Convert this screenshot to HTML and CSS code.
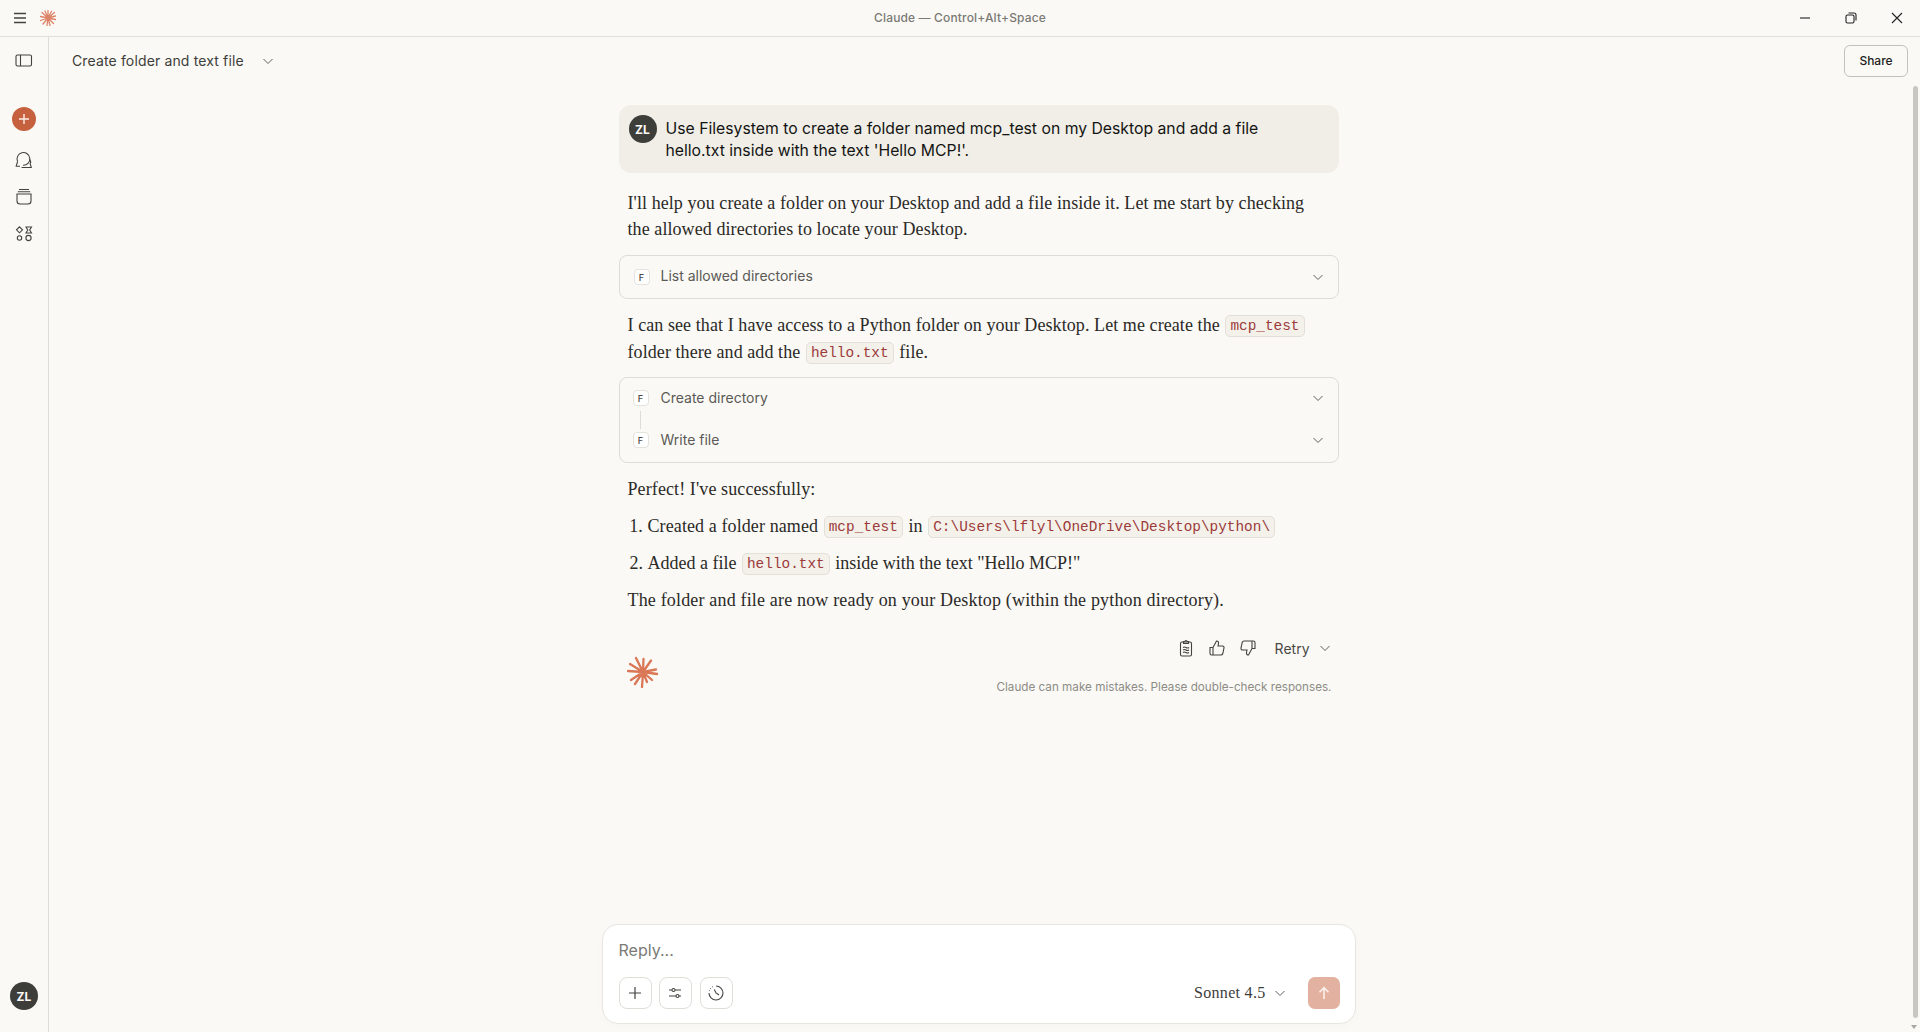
FILE: index.html
```html
<!DOCTYPE html>
<html lang="en">
<head>
  <meta charset="UTF-8" />
  <title>Claude</title>
  <link rel="stylesheet" href="styles.css">
</head>
<body>

<div class="titlebar">
  <div class="titlebar-left">
    <svg class="menu-icon" width="14" height="12" viewBox="0 0 14 12"><path d="M1 1.5h12M1 6h12M1 10.5h12" stroke="#44433f" stroke-width="1.6" fill="none"/></svg>
    <svg class="star-small" width="16" height="16" viewBox="0 0 32 32"><g stroke="#dd8468" stroke-width="2.6" stroke-linecap="round"><path d="M16 16L16 1M16 16L23 2.5M16 16L29 5M16 16L31 12M16 16L31 19M16 16L27 27M16 16L20 31M16 16L14 31M16 16L6 28M16 16L1 21M16 16L1 13M16 16L4 5M16 16L10 2"/></g></svg>
  </div>
  <div class="titlebar-title">Claude — Control+Alt+Space</div>
  <div class="window-controls">
    <svg width="12" height="12" viewBox="0 0 12 12"><path d="M1 6h10" stroke="#222" stroke-width="1.1"/></svg>
    <svg width="12" height="12" viewBox="0 0 12 12"><rect x="1" y="3" width="8" height="8" rx="1.5" stroke="#222" fill="none" stroke-width="1.1"/><path d="M3.5 1h5.5a2 2 0 0 1 2 2v5.5" stroke="#222" fill="none" stroke-width="1.1"/></svg>
    <svg width="12" height="12" viewBox="0 0 12 12"><path d="M1 1l10 10M11 1L1 11" stroke="#222" stroke-width="1.1"/></svg>
  </div>
</div>

<div class="app">
  <nav class="sidebar">
    <svg class="side-toggle" width="18" height="14" viewBox="0 0 18 14"><rect x="1" y="1" width="15.5" height="11" rx="1.5" stroke="#44433f" fill="none" stroke-width="1.1"/><path d="M5.5 1v11" stroke="#44433f" stroke-width="1.1"/></svg>
    <div class="new-chat">
      <svg width="12" height="12" viewBox="0 0 12 12"><path d="M6 1v10M1 6h10" stroke="#fbeee8" stroke-width="1.4"/></svg>
    </div>
    <svg class="side-icon" width="18" height="18" viewBox="0 0 18 18"><g stroke="#44433f" fill="none" stroke-width="1.1"><path d="M2.6 10.5A6.4 6.4 0 1 1 8 14.3"/><path d="M2.6 10.5L1.2 15.2H5"/><path d="M14.9 8.5c.9 1.4 1 3 .3 4.3l1.1 3.7H6.5"/></g></svg>
    <svg class="side-icon" width="18" height="18" viewBox="0 0 18 18"><g stroke="#44433f" fill="none" stroke-width="1.1"><path d="M4 1.5h10M2.8 3.8h12.4"/><path d="M2 6h14v7a3 3 0 0 1-3 3H5a3 3 0 0 1-3-3Z"/></g></svg>
    <svg class="side-icon" width="18" height="18" viewBox="0 0 18 18"><g stroke="#44433f" fill="none" stroke-width="1.1"><path d="M4.5 1.8l3 3-3 3-3-3Z"/><path d="M11 2h5.5l-1.8 3 1.8 3H11l1.8-3Z"/><circle cx="4.5" cy="13" r="2.2"/><circle cx="13.5" cy="13" r="2.6"/></g></svg>
    <div class="avatar side-avatar">ZL</div>
  </nav>

  <main class="main">
    <header class="topbar">
      <div class="chat-title">Create folder and text file</div>
      <svg class="chevron title-chevron" width="12" height="12" viewBox="0 0 12 12"><path d="M1.5 4l4.5 4.5L10.5 4"/></svg>
      <button class="share">Share</button>
    </header>

    <section class="chat">
      <div class="user-msg">
        <div class="avatar">ZL</div>
        <div class="user-text">Use Filesystem to create a folder named mcp_test on my Desktop and add a file hello.txt inside with the text 'Hello MCP!'.</div>
      </div>

      <p class="para first">I'll help you create a folder on your Desktop and add a file inside it. Let me start by checking the allowed directories to locate your Desktop.</p>

      <div class="tool-box">
        <div class="tool-row single">
          <span class="tool-badge">F</span>
          <span class="tool-name">List allowed directories</span>
          <svg class="chevron" width="12" height="12" viewBox="0 0 12 12"><path d="M1.5 4l4.5 4.5L10.5 4"/></svg>
        </div>
      </div>

      <p class="para tall">I can see that I have access to a Python folder on your Desktop. Let me create the <code>mcp_test</code> folder there and add the <code>hello.txt</code> file.</p>

      <div class="tool-box">
        <div class="tool-row">
          <span class="tool-badge">F</span>
          <span class="tool-name">Create directory</span>
          <svg class="chevron" width="12" height="12" viewBox="0 0 12 12"><path d="M1.5 4l4.5 4.5L10.5 4"/></svg>
        </div>
        <div class="tool-line"></div>
        <div class="tool-row">
          <span class="tool-badge">F</span>
          <span class="tool-name">Write file</span>
          <svg class="chevron" width="12" height="12" viewBox="0 0 12 12"><path d="M1.5 4l4.5 4.5L10.5 4"/></svg>
        </div>
      </div>

      <p class="para">Perfect! I've successfully:</p>
      <ol class="steps">
        <li>Created a folder named <code>mcp_test</code> in <code>C:\Users\lflyl\OneDrive\Desktop\python\</code></li>
        <li>Added a file <code>hello.txt</code> inside with the text "Hello MCP!"</li>
      </ol>
      <p class="para closing">The folder and file are now ready on your Desktop (within the python directory).</p>

      <div class="reply-foot">
        <svg class="star-big" width="32" height="32" viewBox="0 0 32 32"><g stroke="#d97757" stroke-width="2.3" stroke-linecap="round"><path d="M16 16L9 2M16 16L16.5 3M16 16L24 4.5M16 16L29 13.5M16 16L30 18M16 16L25 24M16 16L20 26M16 16L15 31M16 16L8 28M16 16L4 24M16 16L1 15M16 16L3 8"/></g></svg>
        <div class="foot-right">
          <div class="actions">
            <svg width="18" height="18" viewBox="0 0 18 18"><g stroke="#44433f" fill="none" stroke-width="1.1"><rect x="3.5" y="3" width="11" height="14" rx="1.5"/><path d="M6.5 4.5v-2h1.5a1 1 0 0 1 2 0h1.5v2ZM6 8.5q1.5-1 3 0t3 0M6 11q1.5-1 3 0t3 0M6 13.5q1.5-1 3 0t3 0"/></g></svg>
            <svg width="18" height="18" viewBox="0 0 18 18"><path d="M2 8.5h3V16H3.5A1.5 1.5 0 0 1 2 14.5ZM5 8.5L8.5 2c1.5 0 2.3 1 2 2.5L10 7h4.5a1.6 1.6 0 0 1 1.5 2l-1.2 5.5a2 2 0 0 1-2 1.5H5" stroke="#44433f" fill="none" stroke-width="1.1"/></svg>
            <svg width="18" height="18" viewBox="0 0 18 18"><path d="M16 9.5h-3V2h1.5A1.5 1.5 0 0 1 16 3.5ZM13 9.5L9.5 16c-1.5 0-2.3-1-2-2.5L8 11H3.5a1.6 1.6 0 0 1-1.5-2l1.2-5.5a2 2 0 0 1 2-1.5H13" stroke="#44433f" fill="none" stroke-width="1.1"/></svg>
            <span class="retry">Retry</span>
            <svg class="chevron" width="12" height="12" viewBox="0 0 12 12"><path d="M1.5 4l4.5 4.5L10.5 4"/></svg>
          </div>
          <div class="disclaimer">Claude can make mistakes. Please double-check responses.</div>
        </div>
      </div>
    </section>

    <div class="composer">
      <div class="placeholder">Reply...</div>
      <div class="composer-row">
        <button class="tool-btn"><svg width="14" height="14" viewBox="0 0 14 14"><path d="M7 1v12M1 7h12" stroke="#44433f" stroke-width="1.2"/></svg></button>
        <button class="tool-btn second"><svg width="14" height="14" viewBox="0 0 14 14"><g stroke="#44433f" fill="none" stroke-width="1.1"><path d="M1 4h3M7 4h6M1 10h7M11 10h2"/><circle cx="5.5" cy="4" r="1.5"/><circle cx="9.5" cy="10" r="1.5"/></g></svg></button>
        <button class="tool-btn"><svg width="18" height="18" viewBox="0 0 18 18"><g stroke="#44433f" fill="none" stroke-width="1.1"><path d="M9 2a7 7 0 1 1-7 7"/><path d="M2.3 7l.2-.7M3.4 4.8l.5-.5M5.3 3l.6-.3M7.3 5.5L9 9l3 2"/></g></svg></button>
        <div class="model">Sonnet 4.5</div>
        <svg class="chevron" width="12" height="12" viewBox="0 0 12 12"><path d="M1.5 4l4.5 4.5L10.5 4"/></svg>
        <button class="send"><svg width="14" height="14" viewBox="0 0 14 14"><path d="M7 13V1.8M2.5 6.2L7 1.6l4.5 4.6" stroke="#fbf1ec" stroke-width="1.6" fill="none"/></svg></button>
      </div>
    </div>
  </main>

  <div class="scroll-thumb"></div>
  <div class="scroll-arrow"></div>
</div>

</body>
</html>
```

FILE: styles.css
```css
* {
  box-sizing: border-box;
}

html, body {
  height: 100%;
}

body {
  margin: 0;
  background: #faf9f5;
  color: #1f1e1c;
  font-family: Inter, "Noto Sans", sans-serif;
  overflow: hidden;
  display: flex;
  flex-direction: column;
}

svg {
  display: block;
  flex-shrink: 0;
}

.titlebar {
  height: 37px;
  flex-shrink: 0;
  border-bottom: 1px solid #e0dfda;
  display: flex;
  align-items: center;
}

.titlebar-left {
  flex: 1;
  display: flex;
  align-items: center;
  gap: 13px;
  padding-left: 13px;
}

.titlebar-title {
  text-align: center;
  font-size: 12px;
  font-weight: 500;
  letter-spacing: 0.15px;
  color: #7b7a75;
  padding-left: 4px;
  margin-top: -2px;
}

.window-controls {
  flex: 1;
  display: flex;
  align-items: center;
  justify-content: flex-end;
  gap: 34px;
  padding-right: 17px;
}

.app {
  flex: 1;
  min-height: 0;
  display: flex;
  position: relative;
}

.sidebar {
  width: 49px;
  flex-shrink: 0;
  border-right: 1px solid #dedcd6;
  display: flex;
  flex-direction: column;
  align-items: center;
  padding-top: 17px;
}

.new-chat {
  width: 24px;
  height: 24px;
  border-radius: 50%;
  background: #c6613f;
  display: flex;
  align-items: center;
  justify-content: center;
  margin-top: 39px;
  margin-bottom: 20px;
}

.side-icon {
  margin-bottom: 19px;
}

.avatar {
  width: 28px;
  height: 28px;
  border-radius: 50%;
  background: #3d3d3a;
  color: #fbfaf7;
  font-size: 12px;
  font-weight: 700;
  display: flex;
  align-items: center;
  justify-content: center;
  flex-shrink: 0;
}

.side-avatar {
  margin-top: auto;
  margin-bottom: 22px;
}

.main {
  flex: 1;
  min-width: 0;
  display: flex;
  flex-direction: column;
  padding-right: 12px;
}

.topbar {
  height: 48px;
  flex-shrink: 0;
  display: flex;
  align-items: center;
  padding-left: 23px;
}

.chat-title {
  font-size: 14px;
  letter-spacing: 0.14px;
  color: #3d3d3a;
  margin-top: -2px;
}

.title-chevron {
  margin-left: 18px;
}

.chevron {
  fill: none;
  stroke: #5f5e5a;
  stroke-width: 1;
}

.share {
  margin-left: auto;
  width: 64px;
  height: 32px;
  background: transparent;
  border: 1px solid #c2c1bb;
  border-radius: 6px;
  font-family: inherit;
  font-size: 12px;
  font-weight: 500;
  color: #1f1e1c;
  padding: 0 0 2px;
}

.chat {
  flex: 1;
  min-height: 0;
  width: 720px;
  margin: 0 auto;
  padding-top: 20px;
}

.user-msg {
  background: #f0eee6;
  border-radius: 12px;
  padding: 10px 24px 11px 10px;
  display: flex;
  gap: 9px;
}

.user-text {
  font-size: 15.75px;
  line-height: 22px;
  padding-top: 3px;
  color: #141413;
}

.para {
  margin: 13px 0 0;
  padding: 0 9px;
  font-family: "Liberation Serif", serif;
  font-size: 18px;
  letter-spacing: 0.1px;
  line-height: 26px;
  color: #2b2a27;
}

.para.first {
  margin-top: 17px;
  letter-spacing: 0.08px;
}

.para.tall {
  line-height: 27px;
  letter-spacing: 0.08px;
}

.para.closing {
  margin-top: 11px;
  letter-spacing: 0.17px;
}

code {
  font-family: "Liberation Mono", monospace;
  font-size: 14.4px;
  letter-spacing: 0;
  line-height: 1;
  vertical-align: 1px;
  color: #9c3a3a;
  background: #f3f1ea;
  border: 1px solid #e2e0d9;
  border-radius: 5px;
  padding: 2px 4px;
  margin: 0 1px;
}

.tool-box {
  margin-top: 13px;
  border: 1px solid #dedcd6;
  border-radius: 8px;
  padding: 0 14px 0 13px;
}

.para.tall + .tool-box {
  margin-top: 11px;
}

.tool-row {
  display: flex;
  align-items: center;
  height: 20px;
  margin: 10px 0;
}

.tool-row + .tool-line + .tool-row {
  margin-top: 0;
  margin-bottom: 12px;
}

.tool-row.single {
  margin: 11px 0;
  padding-left: 1px;
}

.tool-badge {
  width: 16px;
  height: 16px;
  border: 1px solid #e4e2dc;
  border-radius: 4px;
  background: #fff;
  font-size: 9px;
  font-weight: 500;
  color: #4a4945;
  display: flex;
  align-items: center;
  justify-content: center;
  margin-right: 12px;
}

.single .tool-badge {
  margin-right: 11px;
}

.tool-name {
  flex: 1;
  font-size: 14px;
  color: #5a5955;
  margin-top: -1px;
}

.single .tool-name {
  margin-top: -3px;
}

.tool-line {
  width: 1px;
  height: 18px;
  background: #dedcd6;
  margin: -7px 0 1px 7px;
}

.steps {
  margin: 11px 0 0;
  padding: 0 9px 0 29px;
  font-family: "Liberation Serif", serif;
  font-size: 18px;
  letter-spacing: 0.1px;
  line-height: 26px;
  color: #2b2a27;
}

.steps li + li {
  margin-top: 11px;
  letter-spacing: 0;
}

.reply-foot {
  display: flex;
  justify-content: space-between;
  padding: 25px 7px 0 8px;
}

.star-big {
  margin-top: 18px;
}

.foot-right {
  display: flex;
  flex-direction: column;
  align-items: flex-end;
}

.actions {
  display: flex;
  align-items: center;
  gap: 13px;
  height: 20px;
  margin-right: 1px;
}

.retry {
  font-size: 14px;
  color: #4a4945;
  margin-left: 5px;
  margin-right: -4px;
}

.disclaimer {
  margin-top: 22px;
  font-size: 11.7px;
  color: #8d8c86;
}

.composer {
  width: 754px;
  height: 100px;
  flex-shrink: 0;
  margin: 0 auto 8px;
  background: #fff;
  border: 1px solid #e8e6e0;
  border-radius: 16px;
  padding: 13px 15px 0 16px;
  box-shadow: 0 2px 8px rgba(0, 0, 0, 0.02);
}

.placeholder {
  font-size: 16px;
  line-height: 24px;
  color: #7b7a75;
}

.composer-row {
  margin-top: 15px;
  display: flex;
  align-items: center;
  gap: 8px;
}

.tool-btn {
  width: 33px;
  height: 32px;
  background: #fff;
  border: 1px solid #e0ded8;
  border-radius: 8px;
  padding: 0;
  display: flex;
  align-items: center;
  justify-content: center;
}

.tool-btn.second {
  margin-left: -1px;
}

.model {
  margin-left: auto;
  font-family: "Liberation Serif", serif;
  font-size: 16px;
  letter-spacing: 0.3px;
  color: #3d3d3a;
}

.send {
  width: 32px;
  height: 32px;
  margin-left: 14px;
  background: #e3b1a0;
  border: 0;
  border-radius: 7px;
  padding: 0;
  display: flex;
  align-items: center;
  justify-content: center;
}

.scroll-thumb {
  position: absolute;
  right: 2px;
  top: 49px;
  width: 5px;
  bottom: 14px;
  background: #c7c6c1;
  border-radius: 3px;
}

.scroll-arrow {
  position: absolute;
  right: 3px;
  bottom: 3px;
  border-left: 3px solid transparent;
  border-right: 3px solid transparent;
  border-top: 4px solid #a8a7a2;
}
```
